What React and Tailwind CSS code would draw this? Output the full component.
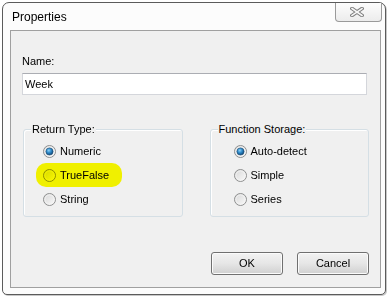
const Radio = ({ checked }) => (
  <svg width="13" height="13" viewBox="0 0 13 13" className="shrink-0">
    <defs>
      <linearGradient id="rbg" x1="0" y1="0" x2="1" y2="1">
        <stop offset="0" stopColor="#d6d6d6" />
        <stop offset="1" stopColor="#fbfbfb" />
      </linearGradient>
      <radialGradient id="rdot" cx="0.4" cy="0.35" r="0.7">
        <stop offset="0" stopColor="#8fd0f5" />
        <stop offset="0.45" stopColor="#2f8ccc" />
        <stop offset="1" stopColor="#0d3f6e" />
      </radialGradient>
    </defs>
    <circle cx="6.5" cy="6.5" r="6" fill="url(#rbg)" stroke="#8e8f8f" strokeWidth="1" />
    <circle cx="6.5" cy="6.5" r="4.6" fill="none" stroke="#f4f4f4" strokeWidth="0.8" />
    {checked && <circle cx="6.5" cy="6.5" r="3.6" fill="url(#rdot)" stroke="#1b4b74" strokeWidth="0.6" />}
  </svg>
)

const Option = ({ label, checked }) => (
  <div className="flex items-center gap-[4px] h-[24px]">
    <Radio checked={checked} />
    <span>{label}</span>
  </div>
)

const GroupBox = ({ title, pad, children }) => (
  <div className={`relative w-[160px] h-[88px] border border-[#d5dfe5] rounded-[3px] shadow-[inset_1px_1px_0_#ffffff] pt-[9px] ${pad}`}>
    <span className="absolute -top-[7px] left-[7px] px-[1px] bg-[#f0f0f0]">{title}</span>
    {children}
  </div>
)

const Button = ({ children }) => (
  <div className="w-[72px] h-[23px] rounded-[3px] border border-[#707070] bg-gradient-to-b from-[#f3f3f3] via-[#e6e6e6] to-[#d0d0d0] shadow-[inset_0_0_0_1px_#fbfbfb] flex items-center justify-center">
    {children}
  </div>
)

export default function App() {
  return (
    <div className="w-[388px] h-[298px] bg-white overflow-hidden pt-[2px] pl-[2px] font-['Liberation_Sans',Arial,sans-serif] text-[11px] leading-[13px] text-black">
      {/* window frame */}
      <div className="w-[384px] h-[293px] border border-[#5b5b5b] rounded-t-[7px] rounded-b-[5px] bg-[#fcfcfc] shadow-[1px_1px_0_#c8c8c8] flex flex-col">
        {/* title bar */}
        <div className="h-[27px] flex items-start justify-between">
          <span className="self-center pl-[9px] text-[12px] leading-[16px]">Properties</span>
          <div className="w-[47px] h-[19px] mr-[3px] border border-t-0 border-[#9a9a9a] rounded-b-[4px] bg-gradient-to-b from-[#fdfdfd] to-[#ececec] flex items-center justify-center pr-[3px]">
            <svg width="14" height="10" viewBox="0 0 14 10">
              <path d="M2 1.5 L12 8.5 M12 1.5 L2 8.5" stroke="#7d7d7d" strokeWidth="3.6" strokeLinecap="square" />
              <path d="M2 1.5 L12 8.5 M12 1.5 L2 8.5" stroke="#f6f6f6" strokeWidth="1.6" strokeLinecap="square" />
            </svg>
          </div>
        </div>

        {/* client area */}
        <div className="ml-[7px] w-[371px] h-[258px] border border-[#a0a0a0] bg-[#f0f0f0] px-[11px] pt-[24px]">
          <div>Name:</div>
          <div className="mt-[5px] w-[345px] h-[22px] bg-white border border-[#d4d6db] border-t-[#abadb3] pl-[2px] flex items-center">
            Week
          </div>

          <div className="flex gap-[27px] ml-[1px] mt-[34px]">
            <GroupBox title="Return Type:" pad="pl-[19px]">
              <Option label="Numeric" checked />
              <Option label="TrueFalse" />
              <Option label="String" />
              <span className="absolute left-[12px] top-[33px] w-[86px] h-[24px] rounded-[10px] bg-[#ffff00] mix-blend-multiply" />
            </GroupBox>
            <GroupBox title="Function Storage:" pad="pl-[23px]">
              <Option label="Auto-detect" checked />
              <Option label="Simple" />
              <Option label="Series" />
            </GroupBox>
          </div>

          <div className="flex gap-[14px] ml-[189px] mt-[35px]">
            <Button>OK</Button>
            <Button>Cancel</Button>
          </div>
        </div>
      </div>
    </div>
  )
}
